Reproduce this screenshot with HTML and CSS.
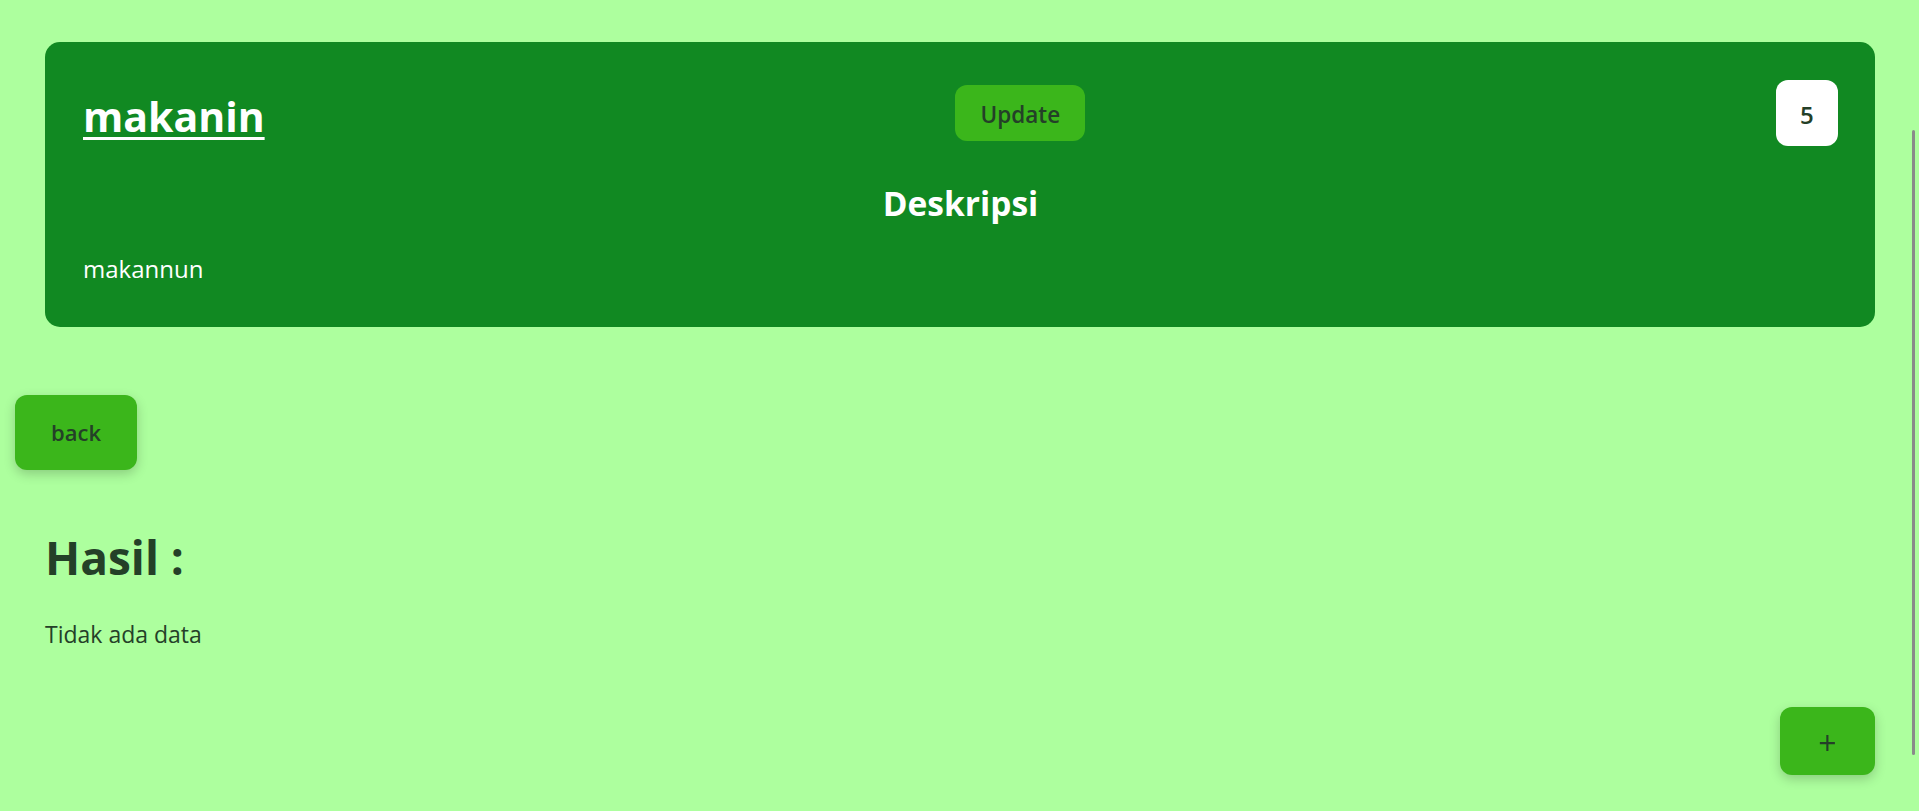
FILE: index.html
```html
<!DOCTYPE html>
<html lang="id">
<head>
<meta charset="utf-8">
<title>makanin</title>
<link rel="stylesheet" href="styles.css">
</head>
<body>
  <div class="page">
    <section class="card">
      <div class="card-head">
        <a class="title" href="#">makanin</a>
        <button class="btn btn-update">Update</button>
        <span class="badge">5</span>
      </div>
      <h2 class="desc-title">Deskripsi</h2>
      <p class="desc">makannun</p>
    </section>
  </div>
  <div class="actions">
    <button class="btn btn-back">back</button>
  </div>
  <section class="results">
    <h1 class="results-title">Hasil :</h1>
    <p class="results-empty">Tidak ada data</p>
  </section>
  <button class="btn fab">+</button>
  <div class="scroll-thumb"></div>
</body>
</html>
```

FILE: styles.css
```css
html, body {
  margin: 0;
  padding: 0;
  height: 100%;
  overflow: hidden;
}

body {
  background: #adff9e;
  font-family: "Open Sans", "Noto Sans", sans-serif;
  color: #244028;
}

.page {
  padding: 42px 44px 0 45px;
}

.card {
  background: #118922;
  border-radius: 15px;
  padding: 38px 37px 42px 38px;
  color: #ffffff;
}

.card-head {
  display: flex;
  justify-content: space-between;
  align-items: center;
}

.title {
  color: #ffffff;
  font-size: 41px;
  font-weight: 700;
  line-height: 60px;
  margin-top: 6px;
  text-decoration: underline;
  text-decoration-thickness: 3px;
  text-underline-offset: 5px;
}

.btn {
  border: none;
  font-family: inherit;
  cursor: pointer;
}

.btn-update {
  background: #3bb61b;
  color: #244028;
  font-size: 22.5px;
  font-weight: 600;
  line-height: 34px;
  padding: 13px 25px 9px;
  border-radius: 12px;
}

.badge {
  background: #ffffff;
  color: #244028;
  font-size: 24px;
  font-weight: 600;
  line-height: 34px;
  padding: 18px 0 14px;
  width: 62px;
  text-align: center;
  border-radius: 12px;
}

.desc-title {
  margin: 34px 0 0;
  text-align: center;
  font-size: 33.5px;
  font-weight: 700;
}

.desc {
  margin: 26px 0 0;
  font-size: 24px;
}

.actions {
  padding: 68px 0 0 15px;
}

.btn-back {
  background: #3bb61b;
  color: #244028;
  font-size: 22px;
  font-weight: 600;
  line-height: 30px;
  padding: 22px 36px 23px;
  border-radius: 12px;
  box-shadow: 0 4px 12px rgba(0, 0, 0, 0.2);
}

.results {
  padding: 0 45px;
}

.results-title {
  margin: 56px 0 0;
  font-size: 46px;
  font-weight: 700;
}

.results-empty {
  margin: 30px 0 0;
  font-size: 23px;
}

.fab {
  position: fixed;
  right: 44px;
  bottom: 36px;
  width: 95px;
  height: 68px;
  padding: 4px 0 0;
  background: #3bb61b;
  color: #244028;
  font-size: 32px;
  line-height: 1;
  border-radius: 12px;
  box-shadow: 0 4px 12px rgba(0, 0, 0, 0.2);
}

.scroll-thumb {
  position: fixed;
  right: 4px;
  top: 130px;
  width: 3px;
  height: 625px;
  background: #8a8a8a;
  border-radius: 2px;
}
```
